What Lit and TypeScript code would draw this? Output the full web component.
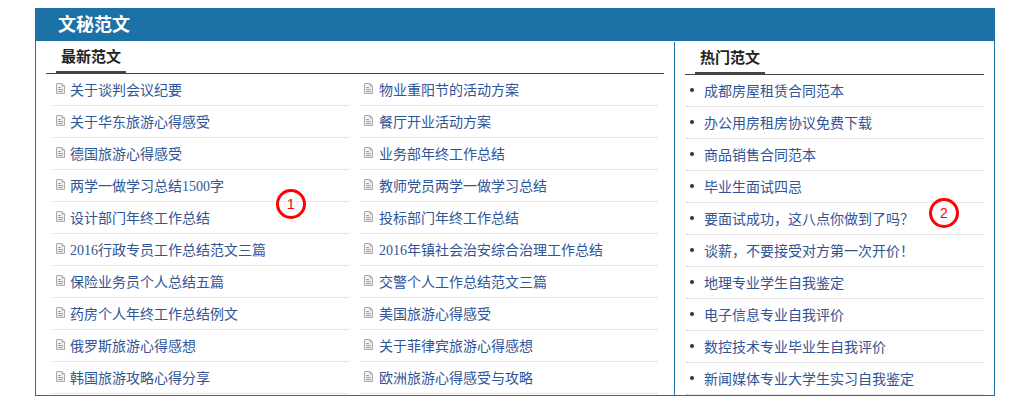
import {LitElement, html, css, svg} from 'lit';
import {customElement} from 'lit/decorators.js';

const LEFT = [
  '关于谈判会议纪要', '物业重阳节的活动方案',
  '关于华东旅游心得感受', '餐厅开业活动方案',
  '德国旅游心得感受', '业务部年终工作总结',
  '两学一做学习总结1500字', '教师党员两学一做学习总结',
  '设计部门年终工作总结', '投标部门年终工作总结',
  '2016行政专员工作总结范文三篇', '2016年镇社会治安综合治理工作总结',
  '保险业务员个人总结五篇', '交警个人工作总结范文三篇',
  '药房个人年终工作总结例文', '美国旅游心得感受',
  '俄罗斯旅游心得感想', '关于菲律宾旅游心得感想',
  '韩国旅游攻略心得分享', '欧洲旅游心得感受与攻略',
];

const RIGHT = [
  '成都房屋租赁合同范本',
  '办公用房租房协议免费下载',
  '商品销售合同范本',
  '毕业生面试四忌',
  '要面试成功，这八点你做到了吗？',
  '谈薪，不要接受对方第一次开价！',
  '地理专业学生自我鉴定',
  '电子信息专业自我评价',
  '数控技术专业毕业生自我评价',
  '新闻媒体专业大学生实习自我鉴定',
];

const docIcon = svg`
  <path d="M.5.5h5.5l2.5 2.5v7.5h-8z" fill="#f1f1f1" stroke="#a9a9a9"/>
  <path d="M6 .5v2.5h2.5" fill="#d8d8d8" stroke="#a9a9a9"/>
  <path d="M2 4.5h3M2 6.5h5M2 8.5h5" stroke="#a0a0a0" fill="none"/>
`;

@customElement('app-root')
export class AppRoot extends LitElement {
  static styles = css`
    :host {
      display: block;
      padding: 8px 0 0 35px;
      font-family: "Liberation Serif", "Noto Sans CJK SC", serif;
      font-size: 14px;
    }
    .box {
      position: relative;
      box-sizing: border-box;
      width: 960px;
      border: 1px solid #1c71a6;
      border-top: 0;
    }
    .head {
      margin: 0 -1px;
      height: 33px;
      padding-left: 23px;
      line-height: 35px;
      background: #1c71a6;
      color: #fff;
      font-size: 18px;
      font-weight: bold;
    }
    .body {
      display: flex;
    }
    .left {
      width: 618px;
      padding: 0 10px;
    }
    .right {
      flex: 1;
      margin-top: 1px;
      padding: 0 10px;
      border-left: 1px solid #1c71a6;
    }
    .title {
      display: flex;
      border-bottom: 1px solid #444;
    }
    .title span {
      box-sizing: border-box;
      width: 70px;
      height: 32px;
      margin-left: 10px;
      padding: 4px 0 0 5px;
      border-bottom: 2px solid #444;
      color: #222;
      font-size: 15px;
      font-weight: bold;
      line-height: 25px;
    }
    ul {
      margin: 0;
      padding: 0;
      list-style: none;
    }
    .grid {
      display: grid;
      grid-template-columns: 297px 297px;
      column-gap: 11px;
      margin-left: 6px;
    }
    .list {
      margin-left: 1px;
    }
    li {
      box-sizing: border-box;
      display: flex;
      align-items: center;
      height: 32px;
      padding-bottom: 2px;
      border-bottom: 1px dotted #ccc;
      color: #2f5597;
      white-space: nowrap;
    }
    li svg {
      width: 9px;
      height: 11px;
      margin: 0 5px 0 4px;
      flex: none;
    }
    li:nth-child(even) svg {
      margin-right: 6px;
    }
    .dot {
      width: 4px;
      height: 4px;
      margin: 0 10px 0 4px;
      border-radius: 50%;
      background: #333;
      flex: none;
    }
    .mark {
      position: absolute;
      box-sizing: border-box;
      display: flex;
      align-items: center;
      justify-content: center;
      width: 30px;
      height: 30px;
      border: 3px solid #f00;
      border-radius: 50%;
      color: #f00;
      font-family: "Liberation Sans", sans-serif;
      font-size: 14px;
    }
    .one {
      left: 240px;
      top: 181px;
    }
    .two {
      left: 893px;
      top: 190px;
    }
  `;

  render() {
    return html`
      <div class="box">
        <div class="head">文秘范文</div>
        <div class="body">
          <section class="left">
            <div class="title"><span>最新范文</span></div>
            <ul class="grid">
              ${LEFT.map((t) => html`
                <li><svg viewBox="0 0 9 11">${docIcon}</svg>${t}</li>
              `)}
            </ul>
          </section>
          <section class="right">
            <div class="title"><span>热门范文</span></div>
            <ul class="list">
              ${RIGHT.map((t) => html`
                <li><i class="dot"></i>${t}</li>
              `)}
            </ul>
          </section>
        </div>
        <div class="mark one">1</div>
        <div class="mark two">2</div>
      </div>
    `;
  }
}
